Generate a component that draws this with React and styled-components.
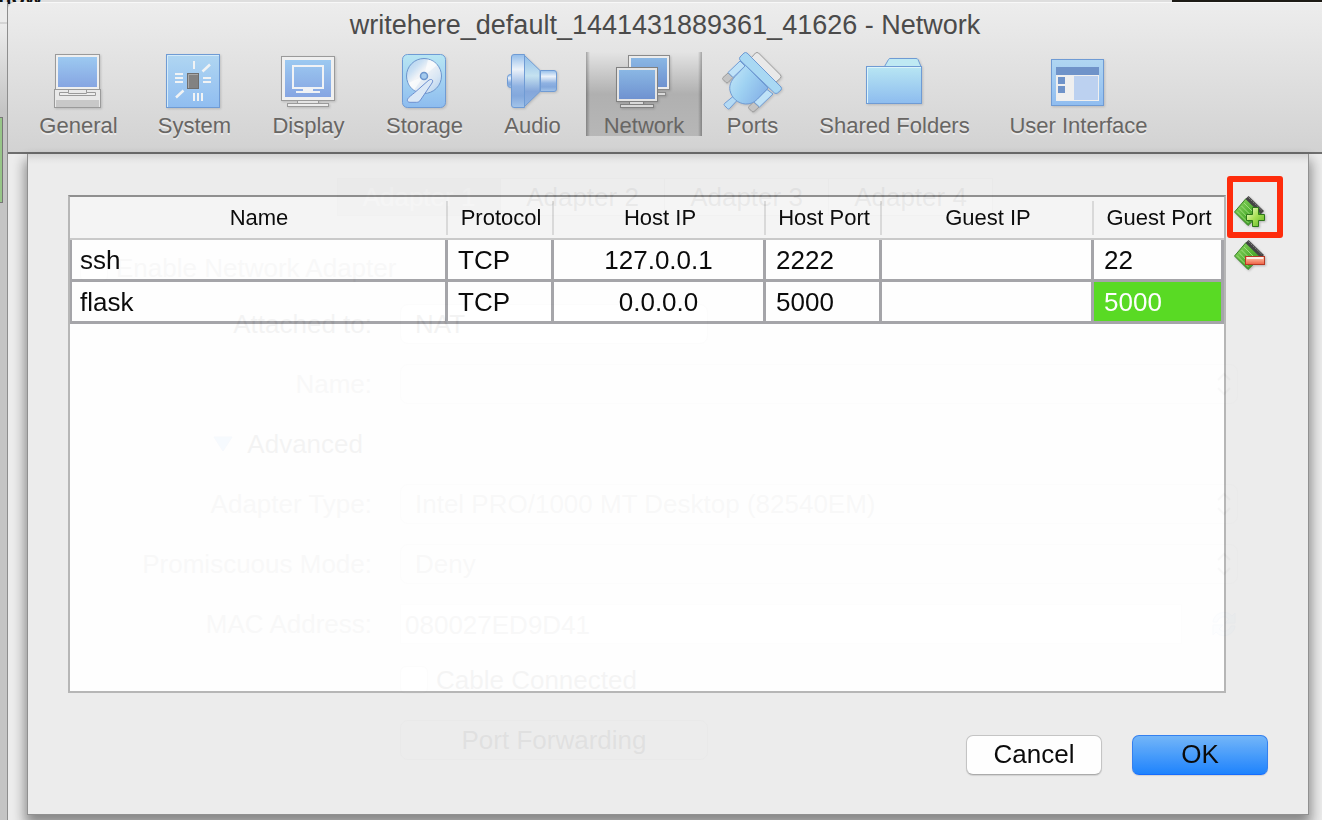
import React from 'react';
import styled, { createGlobalStyle } from 'styled-components';

const GlobalStyle = createGlobalStyle`
  *, *::before, *::after { box-sizing: border-box; }
  body {
    margin: 0;
    background: #c9c9c9;
    font-family: "Liberation Sans", Arial, sans-serif;
    overflow: hidden;
  }
  button, input, select {
    font: inherit;
    color: inherit;
    margin: 0;
  }
`;

/* ---------- desktop behind the window ---------- */

const Desktop = styled.div`
  min-height: 100vh;
  display: flex;
  flex-direction: column;
`;

const BackStrip = styled.div`
  height: 2px;
  display: flex;
  justify-content: space-between;
  background: #dedede;
`;

const BackTitle = styled.span`
  width: 42px;
  height: 4px;
  display: flex;
  justify-content: flex-end;
  align-items: flex-end;
  overflow: hidden;
  font-size: 22px;
  font-weight: bold;
  line-height: 12px;
  color: #111;
`;

const BackDark = styled.span`
  width: 150px;
  background: #1d1b16;
`;

const Stage = styled.div`
  flex: 1;
  display: flex;
`;

const BackEdge = styled.div`
  width: 8px;
  padding-top: 20px;
  border-right: 1px solid #8e8e8e;
  background: linear-gradient(#ececec 0, #ececec 20px, #bdbdbd 21px, #ececec 22px, #c4c4c4 110px);
`;

const BackGreen = styled.div`
  width: 3px;
  height: 86px;
  margin-top: 95px;
  border: solid #777;
  border-width: 1px 1px 1px 0;
  background: #97c588;
`;

/* ---------- window ---------- */

const Window = styled.main`
  flex: 1;
  min-width: 0;
  display: flex;
  flex-direction: column;
  border-top-left-radius: 8px;
  background: #ececec;
  overflow: hidden;
`;

const Header = styled.header`
  padding: 8px 0 16px;
  border-bottom: 2px solid #6e6e6e;
  background: linear-gradient(#ededed, #d2d2d2);
  box-shadow: inset 0 1px 0 #f8f8f8;
`;

const Title = styled.h1`
  margin: 0 0 12px;
  font-size: 27px;
  font-weight: normal;
  line-height: 30px;
  text-align: center;
  color: #4b4b4b;
`;

const Toolbar = styled.nav`
  display: flex;
  gap: 8px;
  padding-left: 15px;
`;

const ToolButton = styled.button`
  min-width: ${(p) => p.$width}px;
  height: 84px;
  padding: 0;
  display: flex;
  flex-direction: column;
  align-items: center;
  gap: 4px;
  border: 0;
  font-size: 22px;
  line-height: 20px;
  white-space: nowrap;
  color: #686664;
  text-shadow: ${(p) => (p.$active ? 'none' : '0 2px 0 rgba(255, 255, 255, 0.5)')};
  background: ${(p) =>
    p.$active
      ? 'linear-gradient(90deg, rgba(0,0,0,.28), rgba(0,0,0,0) 4px, rgba(0,0,0,0) calc(100% - 4px), rgba(0,0,0,.28)), linear-gradient(#e4e4e4, #b0b0b0 50%, #b7b7b7)'
      : 'none'};
`;

const ToolIcon = styled.svg`
  width: 60px;
  height: 60px;
  margin-right: 2px;
  overflow: visible;
  filter: drop-shadow(1px 1px 1px rgba(0, 0, 0, 0.15));
`;

const Body = styled.div`
  flex: 1;
  display: grid;
`;

/* ---------- adapter settings under the sheet ---------- */

const SettingsForm = styled.form`
  grid-area: 1 / 1;
  padding: 24px 84px 0 0;
  font-size: 26px;
  color: #000;
`;

const Tabs = styled.div`
  display: flex;
  justify-content: center;
  height: 38px;
  margin: 0 -84px 26px 0;
`;

const Tab = styled.button`
  width: 164px;
  padding: 0;
  border: 1px solid #b0b0b0;
  border-left-width: ${(p) => (p.$active ? '1px' : 0)};
  background: ${(p) => (p.$active ? '#c4c4c4' : '#fff')};
  color: ${(p) => (p.$active ? '#fff' : '#222')};
`;

const EnableRow = styled.label`
  display: flex;
  align-items: center;
  gap: 8px;
  height: 52px;
  padding-left: 72px;
  color: #777;
`;

const Field = styled.div`
  display: grid;
  grid-template-columns: 364px 1fr;
  column-gap: 28px;
  align-items: center;
  height: ${(p) => p.$height || 60}px;
`;

const FieldLabel = styled.label`
  text-align: right;
  color: ${(p) => (p.$dim ? '#777' : '#222')};
`;

const Disclosure = styled.button`
  justify-self: end;
  display: flex;
  align-items: center;
  gap: 14px;
  padding: 0;
  margin-right: 9px;
  border: 0;
  background: none;
  color: #222;
`;

const Select = styled.select`
  appearance: none;
  width: ${(p) => (p.$short ? '308px' : '100%')};
  height: 40px;
  padding: 0 14px;
  border: 1px solid #c8c8c8;
  border-radius: 8px;
  background: ${(p) => (p.$short ? '#fff' : '#f4f4f4')};
  color: ${(p) => (p.$short ? '#222' : '#777')};
`;

const SelectWrap = styled.div`
  display: grid;
  align-items: center;

  > * { grid-area: 1 / 1; }
`;

const Chevrons = styled.svg`
  justify-self: end;
  width: 16px;
  height: 24px;
  margin-right: 6px;
`;

const AddressRow = styled.div`
  display: flex;
  align-items: center;
  gap: 28px;
`;

const AddressInput = styled.input`
  flex: 1;
  min-width: 0;
  height: 40px;
  padding: 2px 4px 0;
  border: 1px solid #d8d8d8;
  background: #fff;
  color: #777;
`;

const CableLabel = styled.label`
  grid-column: 2;
  display: flex;
  align-items: center;
  gap: 8px;
  color: #333;
`;

const CheckBox = styled.input`
  appearance: none;
  width: 28px;
  height: 28px;
  border: 1px solid #c4c4c4;
  border-radius: 6px;
  background: #fff;
`;

const ForwardButton = styled.button`
  grid-column: 2;
  width: 308px;
  height: 40px;
  border: 1px solid #c0c0c0;
  border-radius: 8px;
  background: #f7f7f7;
  color: #000;
`;

/* ---------- port forwarding sheet ---------- */

const Sheet = styled.section`
  grid-area: 1 / 1;
  z-index: 1;
  display: flex;
  flex-direction: column;
  gap: 42px;
  margin: 0 13px 5px 19px;
  padding: 41px 40px 39px;
  border: solid #8c8c8c;
  border-width: 0 1px 1px;
  background: linear-gradient(#d2d2d2, #e6e6e6 6px, #ececec 10px);
  box-shadow: 0 8px 12px 2px rgba(0, 0, 0, 0.45);
  opacity: 0.95;
`;

const RulesArea = styled.div`
  flex: 1;
  display: flex;
  gap: 8px;
`;

const TableFrame = styled.div`
  flex: 1;
  min-width: 0;
  border: 2px solid #b4b4b4;
  border-top-color: #8b8b8b;
  background: #fff;
`;

const RulesTable = styled.table`
  width: 100%;
  table-layout: fixed;
  border-spacing: 0;
  color: #000;
`;

const Column = styled.col`
  width: ${(p) => p.$width};
`;

const HeadCell = styled.th`
  height: 43px;
  padding: 0;
  border-bottom: 2px solid #c8c8c8;
  font-size: 22px;
  font-weight: normal;
  white-space: nowrap;
  background: linear-gradient(#d9d9d9, #d9d9d9) right 4px / 2px 34px no-repeat #f5f5f5;

  &:last-child { background: #f5f5f5; }
`;

const Cell = styled.td`
  height: 42px;
  padding: 0 10px;
  border: solid #a2a2a6;
  border-width: 0 3px 3px 0;
  font-size: 26px;
  line-height: 30px;
  text-align: ${(p) => (p.$center ? 'center' : 'left')};
  color: ${(p) => (p.$selected ? '#fff' : '#000')};
  background: ${(p) => (p.$selected ? '#52da1a' : '#fff')};

  &:first-child {
    padding-left: 8px;
    border-left-width: 2px;
  }
`;

const RuleActions = styled.div`
  display: flex;
  flex-direction: column;
  gap: 10px;
`;

const IconButton = styled.button`
  position: relative;
  width: 34px;
  height: 34px;
  padding: 0;
  border: 0;
  background: none;

  svg {
    display: block;
    width: 34px;
    height: 34px;
    filter: drop-shadow(1px 1px 1px rgba(0, 0, 0, 0.25));
  }
`;

const Highlight = styled.span`
  position: absolute;
  top: -19px;
  left: -7px;
  width: 56px;
  height: 62px;
  border: 6px solid #ff2200;
  border-radius: 3px;
`;

const SheetButtons = styled.div`
  display: flex;
  justify-content: flex-end;
  gap: 30px;
`;

const PushButton = styled.button`
  width: 136px;
  height: 40px;
  padding: 0 0 2px;
  border: 1px solid ${(p) => (p.$primary ? '#2b7bf0' : '#c2c2c2')};
  border-bottom-color: ${(p) => (p.$primary ? '#0a66ff' : '#a8a8a8')};
  border-radius: 7px;
  background: ${(p) => (p.$primary ? 'linear-gradient(#6db3f9, #147efe)' : '#fff')};
  box-shadow: 0 1px 1px rgba(0, 0, 0, 0.12);
  font-size: 26px;
  line-height: 30px;
  color: #000;
`;

/* ---------- icon drawings ---------- */

const GREY = '#9a9a9a';
const BLUE = '#6f9bd4';

const GradientDefs = styled.svg`
  position: absolute;
`;

const Gradients = () => (
  <GradientDefs width="0" height="0" aria-hidden="true">
    <defs>
      <linearGradient id="screen" x1="0" y1="0" x2="0" y2="1">
        <stop offset="0" stopColor="#9cc9f1" />
        <stop offset="1" stopColor="#86a5e2" />
      </linearGradient>
      <linearGradient id="screenDark" x1="0" y1="0" x2="0" y2="1">
        <stop offset="0" stopColor="#8ab7e4" />
        <stop offset="1" stopColor="#6f92d0" />
      </linearGradient>
      <linearGradient id="tile" x1="0" y1="0" x2="0" y2="1">
        <stop offset="0" stopColor="#b0d6f2" />
        <stop offset="1" stopColor="#90bdf0" />
      </linearGradient>
      <linearGradient id="aqua" x1="0" y1="0" x2="0" y2="1">
        <stop offset="0" stopColor="#b8e6f3" />
        <stop offset="1" stopColor="#8dbcef" />
      </linearGradient>
      <linearGradient id="tube" x1="0" y1="0" x2="0" y2="1">
        <stop offset="0" stopColor="#93bdea" />
        <stop offset="0.28" stopColor="#ecf2fa" />
        <stop offset="0.6" stopColor="#8fb2e2" />
        <stop offset="0.78" stopColor="#83a8dc" />
        <stop offset="1" stopColor="#a3c4ea" />
      </linearGradient>
      <linearGradient id="cone" x1="0" y1="0" x2="0" y2="1">
        <stop offset="0" stopColor="#8ebce8" />
        <stop offset="0.4" stopColor="#c5e2f0" />
        <stop offset="0.7" stopColor="#84a6da" />
        <stop offset="1" stopColor="#8fb4e2" />
      </linearGradient>
      <linearGradient id="disc" x1="0" y1="0" x2="1" y2="1">
        <stop offset="0" stopColor="#a9cdee" />
        <stop offset="0.25" stopColor="#c9dff3" />
        <stop offset="0.42" stopColor="#f2f4f7" />
        <stop offset="0.7" stopColor="#d8e6f4" />
        <stop offset="1" stopColor="#a9cbee" />
      </linearGradient>
      <linearGradient id="plug" x1="0" y1="0" x2="1" y2="0.6">
        <stop offset="0" stopColor="#c6e8f8" />
        <stop offset="0.5" stopColor="#9fd2f2" />
        <stop offset="1" stopColor="#87b4e8" />
      </linearGradient>
      <linearGradient id="board" x1="0" y1="0" x2="1" y2="1">
        <stop offset="0" stopColor="#8fd862" />
        <stop offset="0.5" stopColor="#4fb02c" />
        <stop offset="1" stopColor="#2c8a18" />
      </linearGradient>
      <linearGradient id="plus" x1="0" y1="0" x2="1" y2="1">
        <stop offset="0.1" stopColor="#e4f9b8" />
        <stop offset="0.5" stopColor="#a4e04c" />
        <stop offset="1" stopColor="#4fb01a" />
      </linearGradient>
      <linearGradient id="minus" x1="0" y1="0" x2="0" y2="1">
        <stop offset="0" stopColor="#fbd8c8" />
        <stop offset="0.4" stopColor="#f9a083" />
        <stop offset="1" stopColor="#f0583a" />
      </linearGradient>
    </defs>
  </GradientDefs>
);

const icons = {
  general: (
    <>
      <rect x="7.5" y="2.5" width="44" height="35" fill="#efefef" stroke={GREY} />
      <rect x="10" y="5" width="39" height="30" fill="url(#screen)" />
      <rect x="6.5" y="37.5" width="46" height="18" fill="#e9e9e9" stroke={GREY} />
      <rect x="8" y="48" width="43" height="7" fill="#c8c8c8" />
      <path d="M20.5 38v3M38.5 38v3" stroke={GREY} />
      <path d="M11.5 40.5h9v1h18v-1h9v3h-36z" fill="#ededed" stroke={GREY} />
    </>
  ),
  system: (
    <>
      <rect x="2.5" y="2.5" width="53" height="53" fill="url(#tile)" stroke={BLUE} />
      <path d="M3.5 55V3.5H55" fill="none" stroke="#d4ebf9" />
      <path
        d="M30 9v8M11 22h8M11 26h8M11 30h8M39 26h8M39 30h8M30 41v8M34 41v8M38 41v8"
        stroke="#f1f3f4"
        strokeWidth="2"
      />
      <path d="M38.5 19.5L46 12.5M12 45.5L19.5 38.5" stroke="#f1f3f4" strokeWidth="2.5" />
      <rect x="23.5" y="21.5" width="11" height="15" fill="#828282" stroke="#6f6f6f" />
      <path d="M24.5 36V22.5H34" fill="none" stroke="#a8a8a8" />
    </>
  ),
  display: (
    <>
      <rect x="3.5" y="4.5" width="53" height="44" fill="#f0f0f0" stroke={GREY} />
      <rect x="7" y="8" width="46" height="37" fill="url(#screen)" />
      <rect x="15" y="14" width="30" height="22" fill="none" stroke="#f0f2f5" strokeWidth="2" />
      <path d="M25 37h10v2h7v2H18v-2h7z" fill="#f0f2f5" />
      <rect x="19.5" y="48.5" width="21" height="3" fill="#e4e4e4" stroke={GREY} />
      <rect x="9.5" y="51.5" width="41" height="3" fill="#ededed" stroke={GREY} />
    </>
  ),
  storage: (
    <>
      <rect x="8.5" y="2.5" width="43" height="53" rx="5" fill="url(#aqua)" stroke={BLUE} />
      <circle cx="30" cy="24" r="17.5" fill="url(#disc)" stroke="#6d96cd" />
      <path d="M30 24L34 7.5A17 17 0 0 1 43 13zM30 24L20 38A17 17 0 0 1 14.5 31z" fill="#fff" opacity=".6" />
      <circle cx="30" cy="24" r="3.5" fill="#a5cbee" stroke="#6d96cd" strokeWidth="1.5" />
      <path
        d="M37.5 27.5c1.500.5 1.500 2 .5 3.500L26.500 48c-1 1.600-2 2.300-4 2.300H16c-3 0-3.300-2.600-1.500-4.500 3-3 5-4 8.500-7.300l11-9.700c1.300-1 2.300-1.500 3.500-1.300z"
        fill="#dbe8f6"
        stroke="#6d8fd0"
      />
    </>
  ),
  audio: (
    <>
      <rect x="5.5" y="22.5" width="7" height="13" rx="3" fill="url(#tube)" stroke={BLUE} />
      <path d="M22 3L38 18.5v21L22 55z" fill="url(#cone)" stroke={BLUE} />
      <path d="M38.5 18.5H52q2.500 0 2.500 2.500v16q0 2.500-2.500 2.500H38.500z" fill="url(#tube)" stroke={BLUE} />
      <path d="M22.500 2.500H12q-2.500 0-2.500 2.500v48q0 2.500 2.500 2.500h10.500z" fill="url(#tube)" stroke={BLUE} />
    </>
  ),
  network: (
    <>
      <rect x="36.5" y="40.5" width="16" height="3" fill="#dadada" stroke="#8a8a8a" />
      <rect x="15.5" y="3.5" width="41" height="34" fill="#ececec" stroke="#8a8a8a" />
      <rect x="18" y="6" width="36" height="29" fill="url(#screenDark)" />
      <rect x="3.5" y="15.5" width="41" height="34" fill="#e4e4e4" stroke="#808080" />
      <rect x="6" y="18" width="36" height="29" fill="url(#screenDark)" />
      <rect x="16.5" y="49.5" width="14" height="3" fill="#d8d8d8" stroke="#808080" />
      <rect x="7.5" y="52.5" width="33" height="3" fill="#d8d8d8" stroke="#808080" />
    </>
  ),
  ports: (
    <>
      <path d="M29 6l4.500-5q1.500-1 3 0l22 22q1 1.500 0 3L53 31z" fill="#e9e9e9" stroke={GREY} />
      <path d="M11 44.500l-8.500 7q-1 1 0 2l3 3q1 1 2 0l7.500-8z" fill="#b4daf4" stroke={BLUE} />
      <path d="M6 21l-5 4.500q-1 1 0 2l3 3q1 1 2 0l5-5z" fill="#c4c4c4" stroke={GREY} />
      <path d="M18 9L6 20.500l5 5L23 14z" fill="#bfe2f7" stroke={BLUE} />
      <path d="M31.500 50l-4.500 4.500q-1 1 0 2l3 3q1 1 2 0l5-4.500z" fill="#c4c4c4" stroke={GREY} />
      <path d="M45 37.500L32 50l5.500 5L51 42z" fill="#bfe2f7" stroke={BLUE} />
      <path
        d="M23.500 13.500L13 24.500c-4 4.500-6 9-5 14 1.500 7.500 8 13 15.500 13.500 5 .2 8.500-1.500 12-5L46 36z"
        fill="url(#plug)"
        stroke={BLUE}
      />
      <path
        d="M18 5l4-4q1.500-1 3 0l34 34q1 1.500 0 3l-3.500 3q-1.500 1-3 0L18 8q-1-1.500 0-3z"
        fill="#a9d8f3"
        stroke={BLUE}
      />
    </>
  ),
  folder: (
    <>
      <path d="M20.500 14.500l4-7q.5-1 1.500-1h26q1.500 0 2 1l3 7z" fill="#bfe9f3" stroke={BLUE} />
      <rect x="2.5" y="14.5" width="55" height="37" fill="url(#aqua)" stroke={BLUE} />
      <path d="M3.5 51V15.5H57" fill="none" stroke="#dcf4fa" />
    </>
  ),
  ui: (
    <>
      <rect x="3.5" y="7.5" width="52" height="46" fill="url(#tile)" stroke={BLUE} />
      <rect x="8" y="15" width="43" height="8" fill="#6f93c9" />
      <rect x="8" y="23" width="43" height="26" fill="#efefef" />
      <rect x="10" y="25" width="7" height="7" fill="#6f93c9" />
      <rect x="10" y="34" width="7" height="7" fill="#6f93c9" />
      <rect x="26" y="24" width="24" height="24" fill="#bcd1f0" />
    </>
  ),
};

const Board = () => (
  <>
    <path d="M12 3.5L.5 17 14 30.5 27 18z" fill="url(#board)" stroke="#2f7d1c" />
    <path d="M10 8L22 20M7.5 11L19.5 23M5 13.5L17 26M3 16.5L14.5 28" stroke="#b5ec92" opacity=".7" />
    <path d="M11.5 4L14.5 1 30 16l-3 3z" fill="#3c3c3c" />
    <path d="M14.5 2.5L28 15.5" stroke="#858585" strokeDasharray="2 1" />
  </>
);

/* ---------- data ---------- */

const tools = [
  { id: 'general', label: 'General', width: 111 },
  { id: 'system', label: 'System', width: 105 },
  { id: 'display', label: 'Display', width: 107 },
  { id: 'storage', label: 'Storage', width: 109 },
  { id: 'audio', label: 'Audio', width: 91 },
  { id: 'network', label: 'Network', width: 116, active: true },
  { id: 'ports', label: 'Ports', width: 85 },
  { id: 'folder', label: 'Shared Folders', width: 183 },
  { id: 'ui', label: 'User Interface', width: 169 },
];

const columns = [
  { label: 'Name', width: 'auto' },
  { label: 'Protocol', width: '106px' },
  { label: 'Host IP', width: '212px' },
  { label: 'Host Port', width: '116px' },
  { label: 'Guest IP', width: '212px' },
  { label: 'Guest Port', width: '130px' },
];

const rules = [
  ['ssh', 'TCP', '127.0.0.1', '2222', '', '22'],
  ['flask', 'TCP', '0.0.0.0', '5000', '', '5000'],
];

const PopUp = ({ id, value }) => (
  <SelectWrap>
    <Select id={id} defaultValue={value}>
      <option>{value}</option>
    </Select>
    <Chevrons viewBox="0 0 16 24" aria-hidden="true">
      <path d="M2 8l6-6 6 6M2 16l6 6 6-6" fill="none" stroke="#888" strokeWidth="2" />
    </Chevrons>
  </SelectWrap>
);

const AdapterSettings = () => (
  <SettingsForm inert>
    <Tabs>
      {[1, 2, 3, 4].map((n) => (
        <Tab key={n} type="button" $active={n === 1}>{`Adapter ${n}`}</Tab>
      ))}
    </Tabs>
    <EnableRow>
      <CheckBox type="checkbox" defaultChecked />
      Enable Network Adapter
    </EnableRow>
    <Field>
      <FieldLabel htmlFor="attached">Attached to:</FieldLabel>
      <Select id="attached" $short defaultValue="NAT">
        <option>NAT</option>
      </Select>
    </Field>
    <Field>
      <FieldLabel htmlFor="adapter-name" $dim>Name:</FieldLabel>
      <PopUp id="adapter-name" value="" />
    </Field>
    <Field>
      <Disclosure type="button">
        <svg width="20" height="16" viewBox="0 0 20 16" aria-hidden="true">
          <path d="M1 1h18L10 15z" fill="#58aef5" stroke="#5d8fd8" />
        </svg>
        Advanced
      </Disclosure>
    </Field>
    <Field>
      <FieldLabel htmlFor="adapter-type" $dim>Adapter Type:</FieldLabel>
      <PopUp id="adapter-type" value="Intel PRO/1000 MT Desktop (82540EM)" />
    </Field>
    <Field>
      <FieldLabel htmlFor="promiscuous" $dim>Promiscuous Mode:</FieldLabel>
      <PopUp id="promiscuous" value="Deny" />
    </Field>
    <Field>
      <FieldLabel htmlFor="mac" $dim>MAC Address:</FieldLabel>
      <AddressRow>
        <AddressInput id="mac" defaultValue="080027ED9D41" />
        <svg width="28" height="28" viewBox="0 0 28 28" aria-hidden="true">
          <path
            d="M3 12a11 11 0 0 1 19-6l3-3v10H15l4-4a7 7 0 0 0-12 3zM25 16a11 11 0 0 1-19 6l-3 3V15h10l-4 4a7 7 0 0 0 12-3z"
            fill="#c4dcf6"
            stroke="#8fb0dc"
          />
        </svg>
      </AddressRow>
    </Field>
    <Field $height={52}>
      <CableLabel>
        <CheckBox type="checkbox" defaultChecked />
        Cable Connected
      </CableLabel>
    </Field>
    <Field $height={68}>
      <ForwardButton type="button">Port Forwarding</ForwardButton>
    </Field>
  </SettingsForm>
);

const PortForwarding = () => (
  <Sheet role="dialog" aria-label="Port Forwarding Rules">
    <RulesArea>
      <TableFrame>
        <RulesTable>
          <colgroup>
            {columns.map((c) => (
              <Column key={c.label} $width={c.width} />
            ))}
          </colgroup>
          <thead>
            <tr>
              {columns.map((c) => (
                <HeadCell key={c.label} scope="col">{c.label}</HeadCell>
              ))}
            </tr>
          </thead>
          <tbody>
            {rules.map((rule, r) => (
              <tr key={rule[0]}>
                {rule.map((value, c) => (
                  <Cell key={columns[c].label} $center={c === 2 || c === 4} $selected={r === 1 && c === 5}>
                    {value}
                  </Cell>
                ))}
              </tr>
            ))}
          </tbody>
        </RulesTable>
      </TableFrame>
      <RuleActions>
        <IconButton type="button" aria-label="Add rule">
          <svg viewBox="0 0 34 34" aria-hidden="true">
            <Board />
            <path
              d="M18.5 12.5h6v7h6v6h-6v6h-6v-6h-6v-6h6z"
              fill="url(#plus)"
              stroke="#23700f"
            />
          </svg>
          <Highlight />
        </IconButton>
        <IconButton type="button" aria-label="Remove rule">
          <svg viewBox="0 0 34 34" aria-hidden="true">
            <Board />
            <rect x="11.5" y="17.5" width="19" height="8" fill="url(#minus)" stroke="#b5301a" />
            <path d="M13 19h16" stroke="#fdeee6" strokeWidth="2" />
          </svg>
        </IconButton>
      </RuleActions>
    </RulesArea>
    <SheetButtons>
      <PushButton type="button">Cancel</PushButton>
      <PushButton type="button" $primary>OK</PushButton>
    </SheetButtons>
  </Sheet>
);

export default function App() {
  return (
    <Desktop>
      <GlobalStyle />
      <Gradients />
      <BackStrip>
        <BackTitle>Show</BackTitle>
        <BackDark />
      </BackStrip>
      <Stage>
        <BackEdge>
          <BackGreen />
        </BackEdge>
        <Window>
          <Header>
            <Title>writehere_default_1441431889361_41626 - Network</Title>
            <Toolbar aria-label="Settings sections">
              {tools.map((t) => (
                <ToolButton key={t.id} type="button" $width={t.width} $active={t.active}>
                  <ToolIcon viewBox="0 0 60 60" aria-hidden="true">{icons[t.id]}</ToolIcon>
                  {t.label}
                </ToolButton>
              ))}
            </Toolbar>
          </Header>
          <Body>
            <AdapterSettings />
            <PortForwarding />
          </Body>
        </Window>
      </Stage>
    </Desktop>
  );
}
